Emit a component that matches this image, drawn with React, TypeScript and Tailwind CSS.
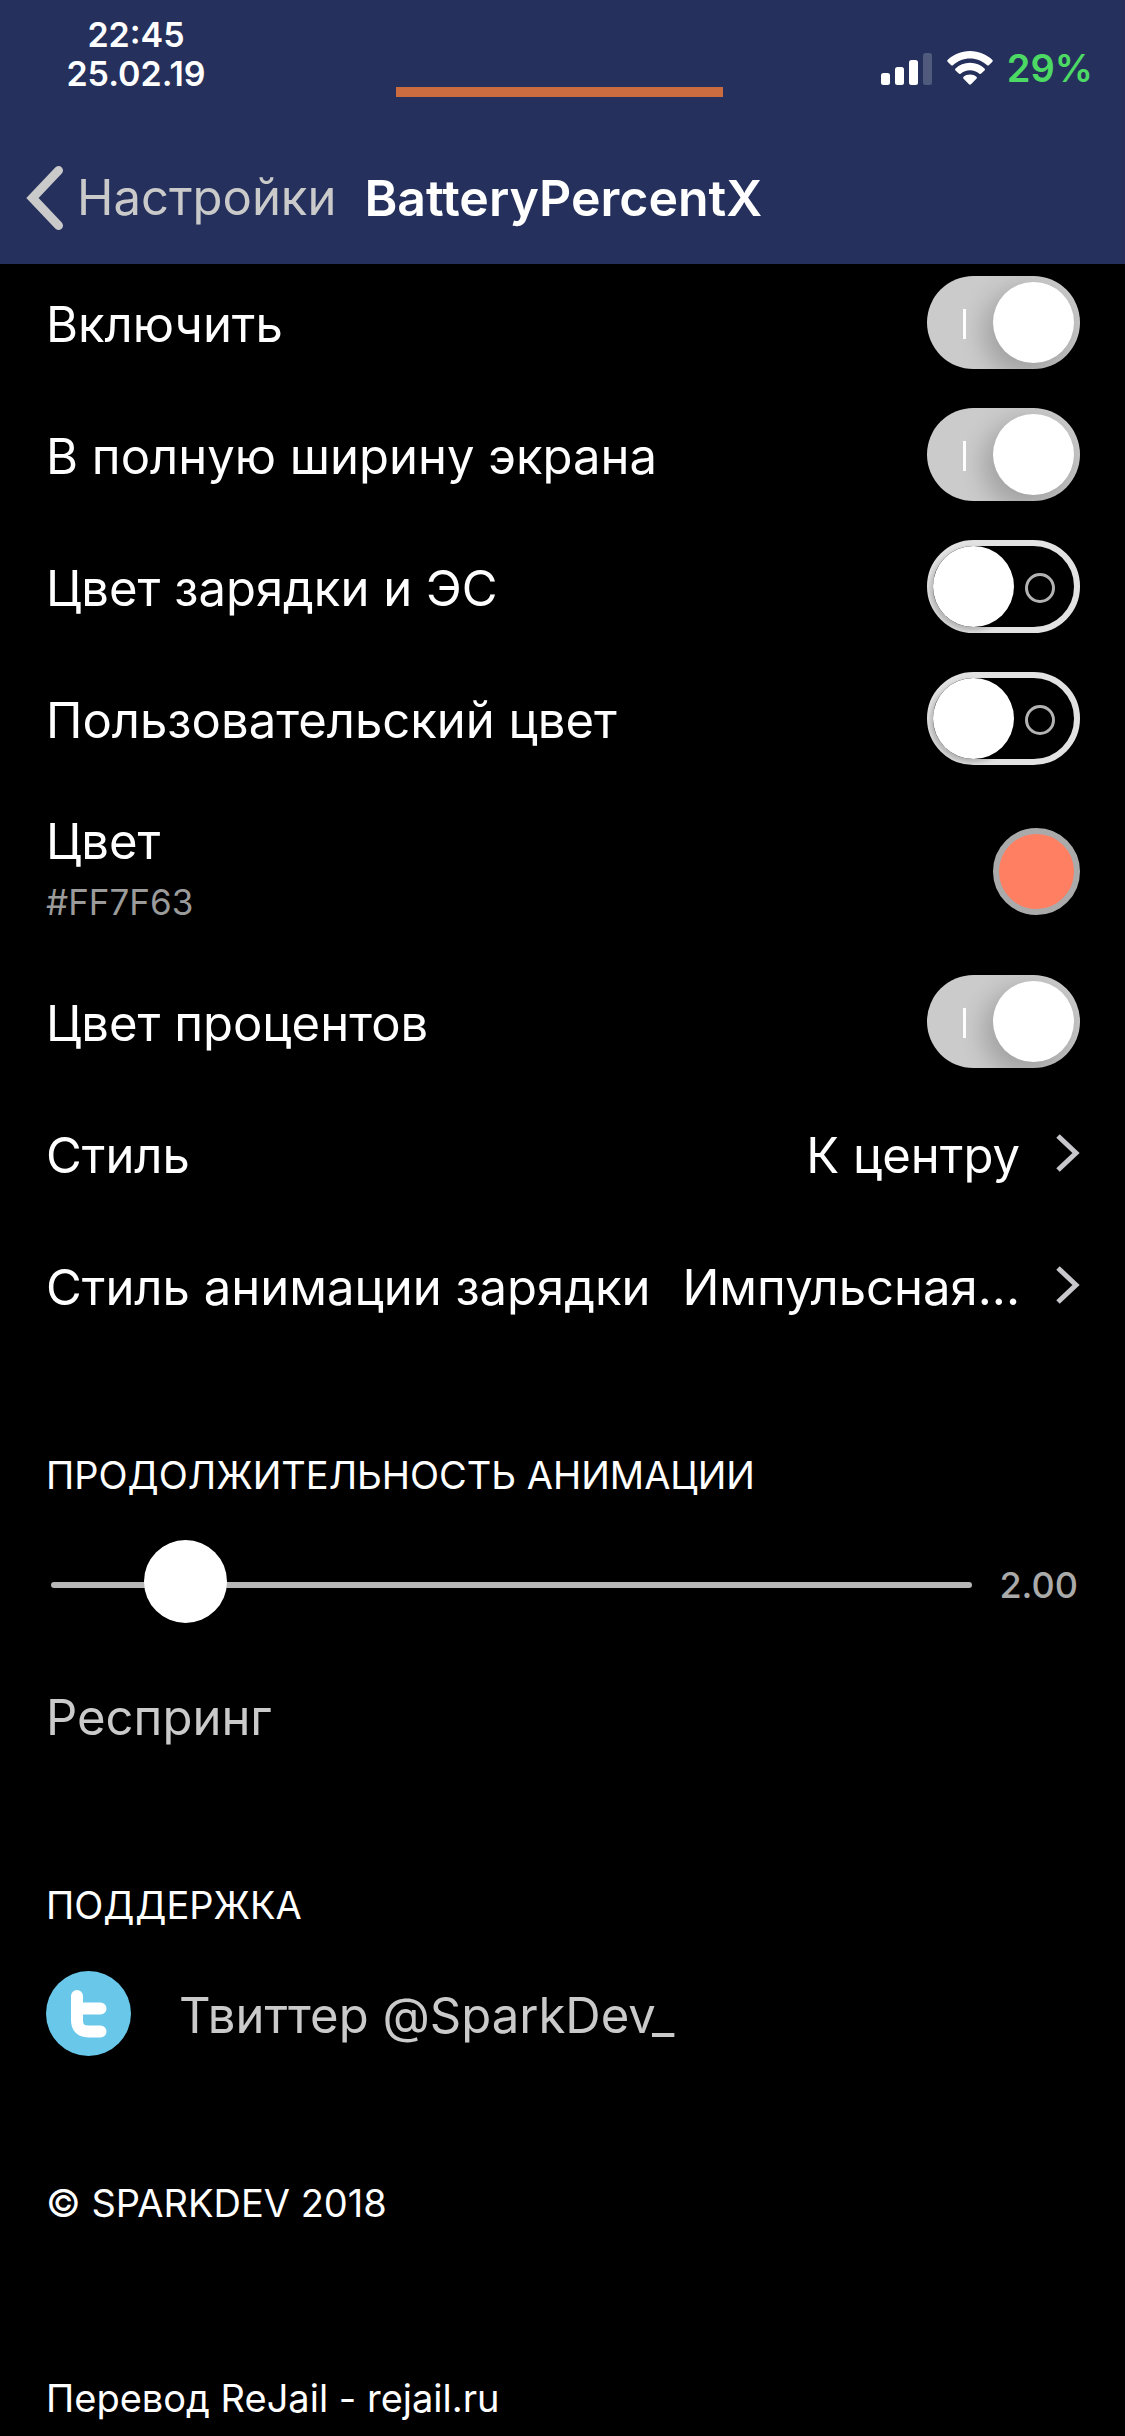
import { useState, type ReactNode } from "react";

function Label({ children }: { children: ReactNode }) {
  return <span className="pt-1.5 whitespace-nowrap">{children}</span>;
}

function SwitchRow({ label, initial }: { label: string; initial: boolean }) {
  const [on, setOn] = useState(initial);
  return (
    <label className="flex h-[132px] cursor-pointer items-center justify-between">
      <Label>{label}</Label>
      <input
        type="checkbox"
        role="switch"
        className="sr-only"
        checked={on}
        onChange={(e) => setOn(e.target.checked)}
      />
      {on ? (
        <span className="flex h-[93px] w-[153px] items-center justify-between overflow-hidden rounded-full bg-[#cbcbcb] pr-1.5 pl-9">
          <span className="mt-[3px] h-[30px] w-[3px] bg-white" />
          <span className="size-[81px] rounded-full bg-white shadow-[-6px_10px_24px_4px_rgba(0,0,0,0.2)]" />
        </span>
      ) : (
        <span className="flex h-[93px] w-[153px] items-center justify-between rounded-full border-6 border-[#e2e2e2] pr-[19px]">
          <span className="size-[81px] rounded-full bg-white shadow-[-2px_3px_5px_1px_rgba(0,0,0,0.2)]" />
          <span className="mt-[3px] size-[30px] rounded-full border-3 border-[#b3b3b3]" />
        </span>
      )}
    </label>
  );
}

function LinkRow({ label, value }: { label: string; value: string }) {
  return (
    <button type="button" className="flex h-[132px] w-full cursor-pointer items-center">
      <Label>{label}</Label>
      <span className="ml-auto pt-1.5 whitespace-nowrap">{value}</span>
      <svg viewBox="0 0 24 38" className="ml-9 h-[38px] w-6 shrink-0" fill="none" stroke="#c7c7cc" strokeWidth="5">
        <path d="M2 2 L20 19 L2 36" />
      </svg>
    </button>
  );
}

function Caption({ children }: { children: ReactNode }) {
  return <h2 className="text-[38px] leading-[48px]">{children}</h2>;
}

function StatusBar() {
  return (
    <div className="grid h-[132px] grid-cols-[1fr_auto_1fr] items-start pr-8 pl-[26px] font-semibold">
      <div className="w-[220px] pt-[15px] text-center text-[34px] leading-[39px]">
        <div>22:45</div>
        <div>25.02.19</div>
      </div>
      <div className="mt-[87px] h-2.5 w-[327px] bg-[#cb6b40]" />
      <div className="flex items-center justify-end pt-11">
        <svg viewBox="0 0 51 33" className="h-[33px] w-[51px]" fill="#fff">
          <rect x="0" y="21" width="9" height="12" rx="2.5" />
          <rect x="14" y="15" width="9" height="18" rx="2.5" />
          <rect x="28" y="8" width="9" height="25" rx="2.5" />
          <rect x="42" y="1" width="9" height="32" rx="2.5" fillOpacity="0.2" />
        </svg>
        <svg viewBox="0 0 46 34" className="ml-[15px] h-[34px] w-[46px]" fill="#fff">
          <path d="M23 0C32 0 39.500 3.500 45.200 8.700Q46.300 9.800 45.200 10.900L41.800 14.200Q41 14.900 40.100 14.200C35.500 10 29.500 7.400 23 7.400S10.500 10 5.900 14.200Q5 14.900 4.200 14.200L.8 10.900Q-.3 9.800 .8 8.700C6.500 3.500 14 0 23 0Z" />
          <path d="M23 11.800C28.700 11.800 33.700 14 37.500 17.400Q38.500 18.400 37.500 19.400L34.200 22.600Q33.300 23.400 32.400 22.700C29.800 20.500 26.600 19.200 23 19.200S16.200 20.500 13.600 22.700Q12.700 23.400 11.800 22.600L8.500 19.400Q7.500 18.400 8.500 17.400C12.300 14 17.300 11.800 23 11.800Z" />
          <path d="M23 23.500C25.500 23.500 27.700 24.400 29.400 25.800Q30.400 26.700 29.400 27.700L24 33.200Q23 34.100 22 33.200L16.600 27.700Q15.600 26.700 16.600 25.800C18.300 24.400 20.500 23.500 23 23.500Z" />
        </svg>
        <span className="ml-3.5 text-[38px] leading-[48px] text-[#4cd964]">29%</span>
      </div>
    </div>
  );
}

export default function App() {
  const [duration, setDuration] = useState(2);
  return (
    <div className="min-h-screen bg-black pb-[14px] font-['Inter','Liberation_Sans',sans-serif] text-[49px] leading-[60px] text-white">
      <header className="relative z-10 h-[264px] bg-[#25315c]">
        <StatusBar />
        <nav className="flex h-[132px] items-center pl-[26px]">
          <a href="#settings" className="flex items-center text-[#cacaca]">
            <svg viewBox="0 0 37 64" className="h-16 w-[37px]" fill="none" stroke="#cacaca" strokeWidth="9" strokeLinecap="round" strokeLinejoin="miter">
              <path d="M32.500 4.500L6.500 32L32.500 59.500" />
            </svg>
            <span className="ml-3.5">Настройки</span>
          </a>
          <h1 className="ml-7 text-[50px] font-semibold">BatteryPercentX</h1>
        </nav>
      </header>

      <main className="-mt-2 pr-[45px] pl-[46px]">
        <SwitchRow label="Включить" initial={true} />
        <SwitchRow label="В полную ширину экрана" initial={true} />
        <SwitchRow label="Цвет зарядки и ЭС" initial={false} />
        <SwitchRow label="Пользовательский цвет" initial={false} />
        <button type="button" className="flex h-[171px] w-full cursor-pointer items-center justify-between pt-1 text-left">
          <span className="flex flex-col">
            <span>Цвет</span>
            <span className="text-[35px] text-[#9b9b9b]">#FF7F63</span>
          </span>
          <span className="size-[87px] rounded-full border-6 border-[#aaaaaa] bg-[#ff7f63]" />
        </button>
        <SwitchRow label="Цвет процентов" initial={true} />
        <LinkRow label="Стиль" value="К центру" />
        <LinkRow label="Стиль анимации зарядки" value="Импульсная..." />

        <section className="pt-[100px]">
          <Caption>ПРОДОЛЖИТЕЛЬНОСТЬ АНИМАЦИИ</Caption>
          <div className="mt-11 flex items-center pl-[5px]">
            <input
              type="range"
              min={1}
              max={10}
              step={0.01}
              value={duration}
              onChange={(e) => setDuration(Number(e.target.value))}
              aria-label="Продолжительность анимации"
              className="h-[83px] min-w-0 flex-1 cursor-pointer appearance-none bg-transparent [&::-webkit-slider-runnable-track]:h-1.5 [&::-webkit-slider-runnable-track]:rounded-full [&::-webkit-slider-runnable-track]:bg-[#b7b7b7] [&::-webkit-slider-thumb]:-mt-[42px] [&::-webkit-slider-thumb]:size-[83px] [&::-webkit-slider-thumb]:appearance-none [&::-webkit-slider-thumb]:rounded-full [&::-webkit-slider-thumb]:bg-white"
            />
            <output className="w-[108px] pr-0.5 text-right text-[36px] font-medium text-[#aaaaaa]">{duration.toFixed(2)}</output>
          </div>
          <button type="button" className="mt-[62px] block cursor-pointer text-[#cacaca]">
            Респринг
          </button>
        </section>

        <section className="pt-[133px]">
          <Caption>ПОДДЕРЖКА</Caption>
          <a href="#twitter" className="mt-[42px] flex items-center text-[#cacaca]">
            <svg viewBox="0 0 85 85" className="size-[85px]">
              <circle cx="42.500" cy="42.500" r="42.500" fill="#69c7ea" />
              <path d="M31 25V49Q31 60.500 42.500 60.500H54.500M31 37.500H54.500" fill="none" stroke="#fff" strokeWidth="12" strokeLinecap="round" strokeLinejoin="round" />
            </svg>
            <span className="ml-12 pt-1">Твиттер @SparkDev_</span>
          </a>
        </section>

        <footer className="pt-[123px] text-[38px] leading-[48px]">
          <p>© SPARKDEV 2018</p>
          <p className="mt-[147px]">Перевод ReJail - rejail.ru</p>
        </footer>
      </main>
    </div>
  );
}
